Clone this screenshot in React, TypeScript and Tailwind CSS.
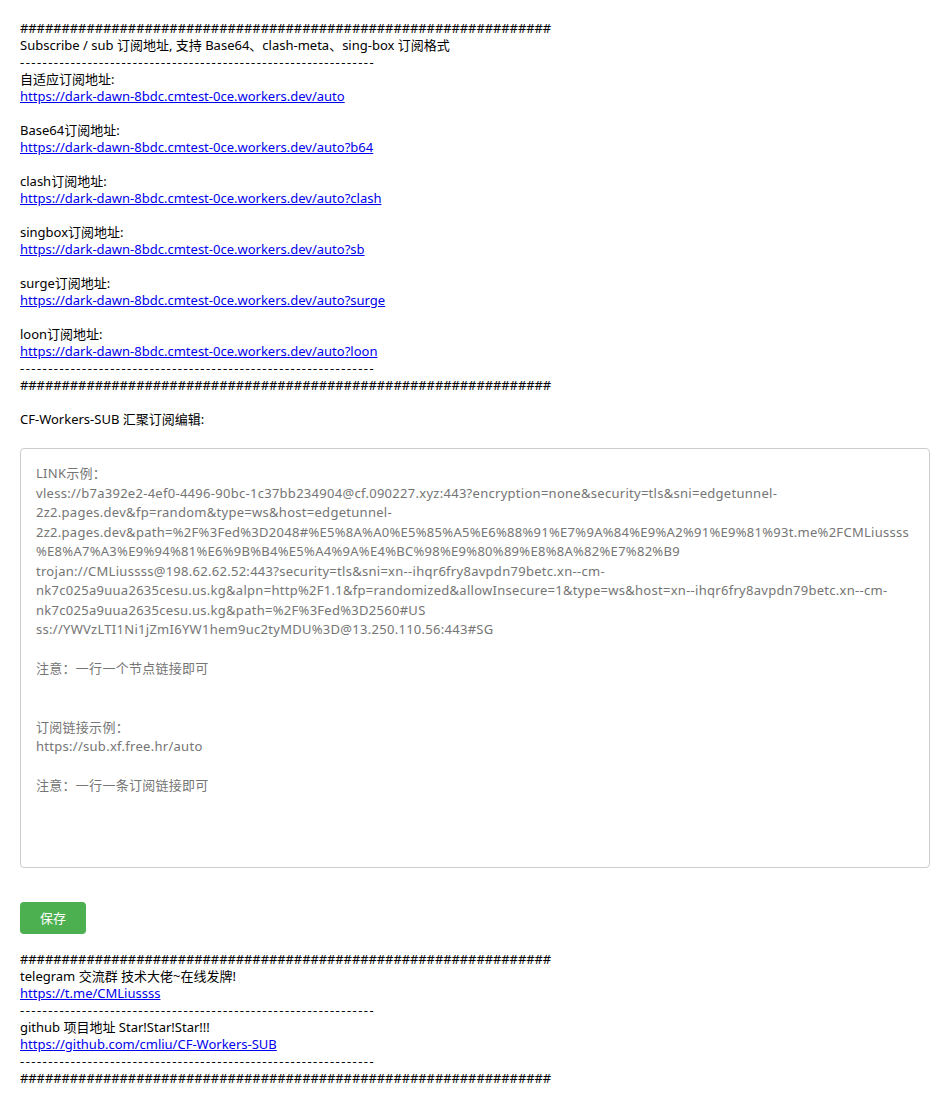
import React from "react";

const base = "https://dark-dawn-8bdc.cmtest-0ce.workers.dev/auto";

const subs = [
  { label: "自适应订阅地址:", url: base },
  { label: "Base64订阅地址:", url: base + "?b64" },
  { label: "clash订阅地址:", url: base + "?clash" },
  { label: "singbox订阅地址:", url: base + "?sb" },
  { label: "surge订阅地址:", url: base + "?surge" },
  { label: "loon订阅地址:", url: base + "?loon" },
];

const HASH = "################################################################";
const DASH = "---------------------------------------------------------------";

const placeholder = `LINK示例：
vless://b7a392e2-4ef0-4496-90bc-1c37bb234904@cf.090227.xyz:443?encryption=none&security=tls&sni=edgetunnel-2z2.pages.dev&fp=random&type=ws&host=edgetunnel-2z2.pages.dev&path=%2F%3Fed%3D2048#%E5%8A%A0%E5%85%A5%E6%88%91%E7%9A%84%E9%A2%91%E9%81%93t.me%2FCMLiussss%E8%A7%A3%E9%94%81%E6%9B%B4%E5%A4%9A%E4%BC%98%E9%80%89%E8%8A%82%E7%82%B9
trojan://CMLiussss@198.62.62.52:443?security=tls&sni=xn--ihqr6fry8avpdn79betc.xn--cm-nk7c025a9uua2635cesu.us.kg&alpn=http%2F1.1&fp=randomized&allowInsecure=1&type=ws&host=xn--ihqr6fry8avpdn79betc.xn--cm-nk7c025a9uua2635cesu.us.kg&path=%2F%3Fed%3D2560#US
ss://YWVzLTI1Ni1jZmI6YW1hem9uc2tyMDU%3D@13.250.110.56:443#SG

注意：一行一个节点链接即可


订阅链接示例：
https://sub.xf.free.hr/auto

注意：一行一条订阅链接即可`;

function Link({ href }: { href: string }) {
  return (
    <a href={href} className="text-[#0000ee] underline">
      {href}
    </a>
  );
}

function Hashes() {
  return <div className="tracking-[-0.1px]">{HASH}</div>;
}

function Dashes() {
  return <div className="tracking-[1.45px]">{DASH}</div>;
}

export default function App() {
  return (
    <div className="bg-white min-h-screen p-5 text-[13px] leading-[17px] text-black font-['Noto_Sans','Noto_Sans_CJK_SC',sans-serif]">
      <Hashes />
      <div>Subscribe / sub 订阅地址, 支持 Base64、clash-meta、sing-box 订阅格式</div>
      <Dashes />
      {subs.map((s, i) => (
        <div key={s.label}>
          {i > 0 && <div className="h-[17px]" />}
          <div>{s.label}</div>
          <Link href={s.url} />
        </div>
      ))}
      <Dashes />
      <Hashes />
      <div className="h-[17px]" />
      <div>CF-Workers-SUB 汇聚订阅编辑:</div>

      <textarea
        className="block mt-5 w-full h-[420px] p-[15px] border border-[#ccc] rounded bg-white text-[13px] leading-[19.5px] tracking-[0.28px] text-[#333] placeholder:text-[#757575] resize-none outline-none"
        placeholder={placeholder}
      />

      <button className="block mt-[34px] bg-[#4caf50] text-white rounded px-5 h-8 text-[13px]">
        保存
      </button>

      <div className="mt-[17px]">
        <Hashes />
        <div>telegram 交流群 技术大佬~在线发牌!</div>
        <Link href="https://t.me/CMLiussss" />
        <Dashes />
        <div>github 项目地址 Star!Star!Star!!!</div>
        <Link href="https://github.com/cmliu/CF-Workers-SUB" />
        <Dashes />
        <Hashes />
      </div>
    </div>
  );
}
